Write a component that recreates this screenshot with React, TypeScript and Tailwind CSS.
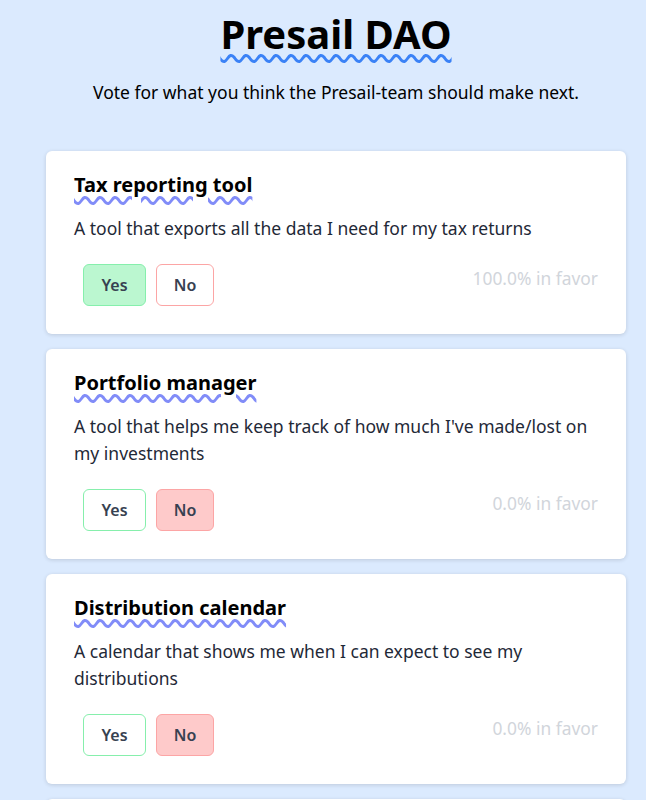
import React from "react";

type Item = { title: string; desc: string; vote: "yes" | "no"; pct: string };

const items: Item[] = [
  { title: "Tax reporting tool", desc: "A tool that exports all the data I need for my tax returns", vote: "yes", pct: "100.0%" },
  { title: "Portfolio manager", desc: "A tool that helps me keep track of how much I've made/lost on my investments", vote: "no", pct: "0.0%" },
  { title: "Distribution calendar", desc: "A calendar that shows me when I can expect to see my distributions", vote: "no", pct: "0.0%" },
  { title: "Price alerts", desc: "Get notified when a token hits a price", vote: "no", pct: "0.0%" },
];

function Card({ item }: { item: Item }) {
  return (
    <div className="bg-white rounded-md shadow-[0_1px_4px_rgba(0,0,0,0.14)] px-7 pt-[20px] pb-[28px]">
      <h2 className="text-[20px] font-bold leading-7 text-black underline decoration-wavy decoration-[#818cf8] underline-offset-[4px] decoration-[2.5px] inline">
        {item.title}
      </h2>
      <p className="mt-[16px] text-[17.5px] leading-[27.5px] text-[#1f2937]">{item.desc}</p>
      <div className="mt-[21px] flex justify-between items-start">
        <div className="flex gap-[10px] ml-[9px]">
          <button
            className={
              "h-[42px] w-[63px] rounded-md border text-[16px] font-semibold text-[#374151] border-[#86efac] " +
              (item.vote === "yes" ? "bg-[#bbf7d0]" : "bg-white")
            }
          >
            Yes
          </button>
          <button
            className={
              "h-[42px] w-[58px] rounded-md border text-[16px] font-semibold text-[#374151] border-[#fca5a5] " +
              (item.vote === "no" ? "bg-[#fecaca]" : "bg-white")
            }
          >
            No
          </button>
        </div>
        <div className="text-[17.4px] leading-7 text-[#d1d5db] mt-0">{item.pct} in favor</div>
      </div>
    </div>
  );
}

export default function App() {
  return (
    <div className="min-h-screen bg-[#dbeafe] pl-[26px]" style={{ fontFamily: '"Noto Sans", sans-serif' }}>
      <div className="pt-[10px] text-center">
        <h1 className="inline text-[40px] font-bold leading-[48px] text-black underline decoration-wavy decoration-[#3b82f6] decoration-[2.5px] underline-offset-[5px]">
          Presail DAO
        </h1>
        <p className="mt-[20px] text-[17.5px] leading-7 text-black">Vote for what you think the Presail-team should make next.</p>
      </div>
      <div className="mx-[20px] mt-[45px] flex flex-col gap-[15px] pb-10">
        {items.map((it) => (
          <Card key={it.title} item={it} />
        ))}
      </div>
    </div>
  );
}
